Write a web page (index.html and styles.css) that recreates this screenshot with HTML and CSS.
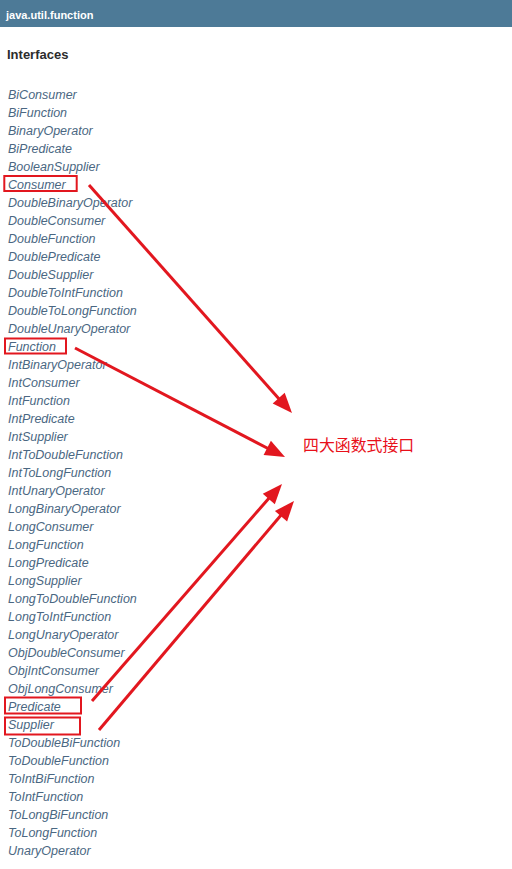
FILE: index.html
```html
<!DOCTYPE html>
<html>
<head>
<meta charset="utf-8">
<link rel="stylesheet" href="styles.css">
</head>
<body>
<div class="page">
  <div class="bar">java.util.function</div>
  <main class="content">
    <h2 class="title">Interfaces</h2>
    <ul class="list">
      <li>BiConsumer</li>
      <li>BiFunction</li>
      <li>BinaryOperator</li>
      <li>BiPredicate</li>
      <li>BooleanSupplier</li>
      <li>Consumer</li>
      <li>DoubleBinaryOperator</li>
      <li>DoubleConsumer</li>
      <li>DoubleFunction</li>
      <li>DoublePredicate</li>
      <li>DoubleSupplier</li>
      <li>DoubleToIntFunction</li>
      <li>DoubleToLongFunction</li>
      <li>DoubleUnaryOperator</li>
      <li>Function</li>
      <li>IntBinaryOperator</li>
      <li>IntConsumer</li>
      <li>IntFunction</li>
      <li>IntPredicate</li>
      <li>IntSupplier</li>
      <li>IntToDoubleFunction</li>
      <li>IntToLongFunction</li>
      <li>IntUnaryOperator</li>
      <li>LongBinaryOperator</li>
      <li>LongConsumer</li>
      <li>LongFunction</li>
      <li>LongPredicate</li>
      <li>LongSupplier</li>
      <li>LongToDoubleFunction</li>
      <li>LongToIntFunction</li>
      <li>LongUnaryOperator</li>
      <li>ObjDoubleConsumer</li>
      <li>ObjIntConsumer</li>
      <li>ObjLongConsumer</li>
      <li>Predicate</li>
      <li>Supplier</li>
      <li>ToDoubleBiFunction</li>
      <li>ToDoubleFunction</li>
      <li>ToIntBiFunction</li>
      <li>ToIntFunction</li>
      <li>ToLongBiFunction</li>
      <li>ToLongFunction</li>
      <li>UnaryOperator</li>
    </ul>
  </main>
  <svg class="marks" width="512" height="869" viewBox="0 0 512 869" xmlns="http://www.w3.org/2000/svg">
    <g fill="none" stroke="#e2171f" stroke-width="2">
      <rect x="4.3" y="176" width="72.4" height="15"/>
      <rect x="5" y="338.5" width="61" height="15"/>
      <rect x="5" y="697.5" width="76" height="16"/>
      <rect x="5" y="717.5" width="75" height="17"/>
    </g>
    <g stroke="#e2171f" stroke-width="3" fill="none">
      <line x1="89" y1="185" x2="280" y2="400"/>
      <line x1="75" y1="348" x2="269" y2="449"/>
      <line x1="92" y1="701" x2="270" y2="497"/>
      <line x1="99" y1="730" x2="282" y2="514"/>
    </g>
    <g fill="#e2171f">
      <polygon points="292,413 272.7,403.4 284.7,392.8"/>
      <polygon points="285,457 263.6,454.9 270.9,440.7"/>
      <polygon points="282,484 274.8,504.3 262.8,493.8"/>
      <polygon points="294,501 287.1,521.4 274.9,511"/>
    </g>
  </svg>
  <div class="note">四大函数式接口</div>
</div>
</body>
</html>
```
FILE: styles.css
```css
html, body {
  margin: 0;
  padding: 0;
  background: #ffffff;
}
.page {
  position: relative;
  width: 512px;
  height: 869px;
  overflow: hidden;
  font-family: "Liberation Sans", Arial, sans-serif;
}
.bar {
  height: 27px;
  line-height: 31px;
  background: #4d7a97;
  color: #ffffff;
  font-weight: bold;
  font-size: 11px;
  padding-left: 6px;
}
.content {
  padding: 0 8px;
}
.title {
  margin: 20px 0 23px -1px;
  font-size: 13px;
  line-height: 16px;
  font-weight: bold;
  color: #2c2c2c;
}
.list {
  list-style: none;
  margin: 0;
  padding: 0;
}
.list li {
  font-style: italic;
  font-size: 12.5px;
  line-height: 18px;
  color: #4a6782;
}
.marks {
  position: absolute;
  left: 0;
  top: 0;
  pointer-events: none;
}
.note {
  position: absolute;
  left: 303px;
  top: 435px;
  font-family: "Noto Sans CJK SC", sans-serif;
  font-size: 15.9px;
  line-height: 20px;
  color: #e8101a;
}
```
